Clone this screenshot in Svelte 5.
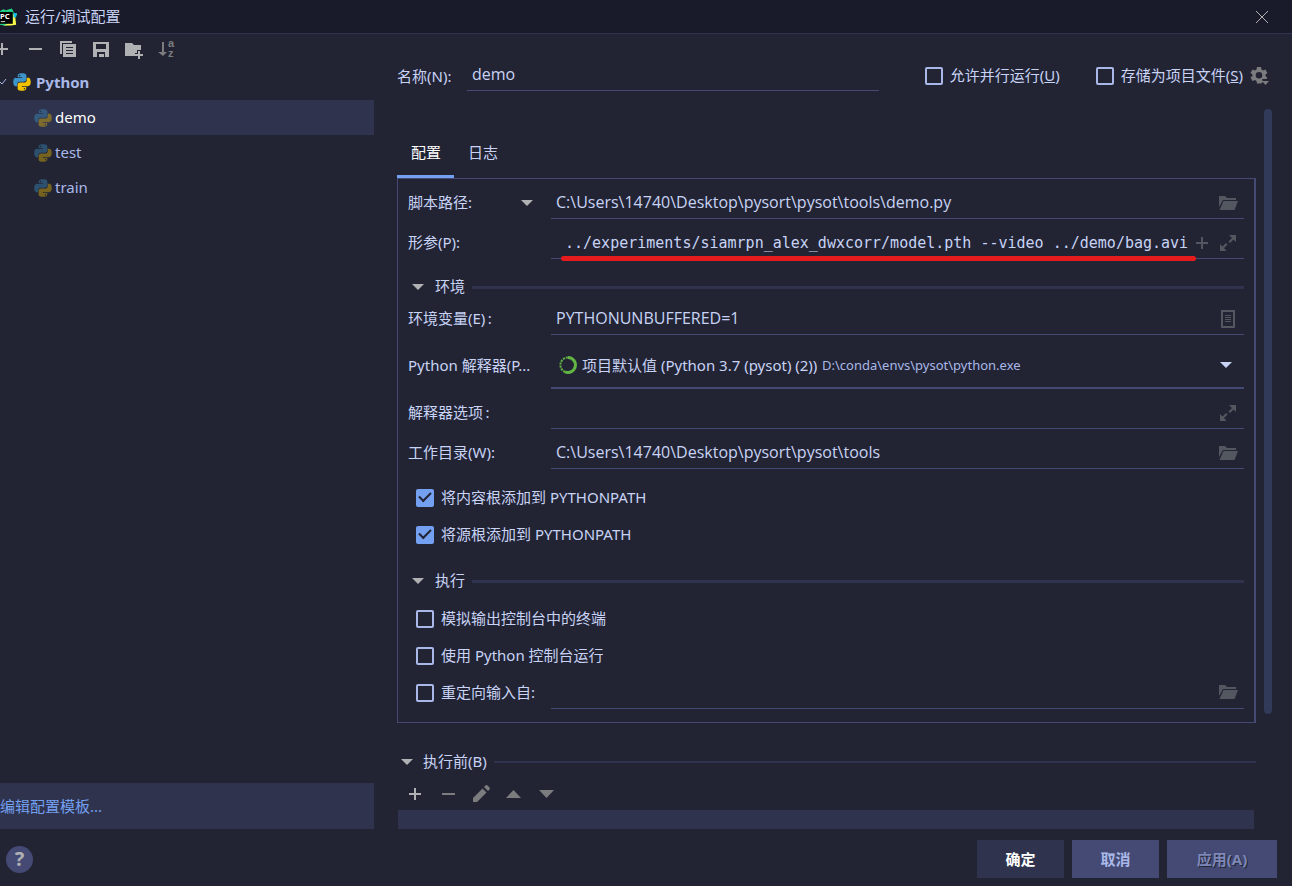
<script lang="ts">
    let name = $state('demo')
    let selected = $state('demo')
    let tab = $state('配置')
    let scriptPath = $state('C:\\Users\\14740\\Desktop\\pysort\\pysot\\tools\\demo.py')
    let params = $state('../experiments/siamrpn_alex_dwxcorr/model.pth --video ../demo/bag.avi')
    let envVars = $state('PYTHONUNBUFFERED=1')
    let options = $state('')
    let workDir = $state('C:\\Users\\14740\\Desktop\\pysort\\pysot\\tools')
    let redirect = $state('')

    const configs = ['demo', 'test', 'train']
    const tabs = ['配置', '日志']
    let pathChecks = $state([
        { label: '将内容根添加到 PYTHONPATH', on: true },
        { label: '将源根添加到 PYTHONPATH', on: true },
    ])
    let runChecks = $state([
        { label: '模拟输出控制台中的终端', on: false },
        { label: '使用 Python 控制台运行', on: false },
    ])
</script>

{#snippet python()}
    <svg class="icon" viewBox="0 0 16 16" aria-hidden="true">
        <path fill="#3d94c9" fill-rule="evenodd" d="M7.9 1C4.5 1 4.6 2.6 4.6 2.6V4.1H8.1V4.7H3.3C3.3 4.7 1 4.4 1 8s2 3.4 2 3.4h1.2V9.7s-.1-2 2-2h3.4s1.9 0 1.9-1.9V2.7S11.7 1 7.9 1ZM6 2.1a.6.6 0 1 1 0 1.2.6.6 0 0 1 0-1.2Z" />
        <path fill="#f2c100" fill-rule="evenodd" transform="rotate(180 8 8)" d="M7.9 1C4.5 1 4.6 2.6 4.6 2.6V4.1H8.1V4.7H3.3C3.3 4.7 1 4.4 1 8s2 3.4 2 3.4h1.2V9.7s-.1-2 2-2h3.4s1.9 0 1.9-1.9V2.7S11.7 1 7.9 1ZM6 2.1a.6.6 0 1 1 0 1.2.6.6 0 0 1 0-1.2Z" />
    </svg>
{/snippet}

{#snippet plus()}
    <svg class="icon" viewBox="0 0 20 20" aria-hidden="true"><path fill="currentColor" d="M9 4h2v5h5v2h-5v5H9v-5H4V9h5z" /></svg>
{/snippet}

{#snippet minus()}
    <svg class="icon" viewBox="0 0 20 20" aria-hidden="true"><path fill="currentColor" d="M4 9h13v2H4z" /></svg>
{/snippet}

{#snippet arrow()}
    <svg class="arrow" viewBox="0 0 12 8" aria-hidden="true"><path fill="currentColor" d="M0 1h12L6 7z" /></svg>
{/snippet}

{#snippet folder()}
    <button class="field-btn" aria-label="浏览">
        <svg class="icon" viewBox="0 0 20 20" aria-hidden="true">
            <path fill="currentColor" d="M1 3h6l2 2h9v2H5L1 14zM5.500 8H20l-3.500 9H1.500z" />
        </svg>
    </button>
{/snippet}

{#snippet expand()}
    <button class="field-btn" aria-label="展开">
        <svg class="icon" viewBox="0 0 20 20" aria-hidden="true">
            <path fill="currentColor" d="M11 2h7v7l-2.500-2.500-3.500 3.500-1.500-1.500L14 5zM2 11l2.500 2.500L8 10l1.500 1.500L6 15l2.500 3H2z" />
        </svg>
    </button>
{/snippet}

<div class="dialog">
    <header class="titlebar">
        <svg class="logo" viewBox="0 0 20 20" aria-hidden="true">
            <path fill="#21d789" d="M0 3 4 1l3 1 7-2 2 4v12l-3 3-8 1-5-1z" />
            <path fill="#fcf84a" d="m15 7 5-1-2 5 1 8-6 1H4l11-5z" />
            <path fill="#07c3f2" d="m16 5 4 1-1 4-3 1z" />
            <path fill="#000" d="M0 4h15v14H0z" />
            <path fill="#fff" d="M1 15h5v1H1z" />
            <text x="0" y="12" fill="#fff" font-size="9" font-weight="bold">PC</text>
        </svg>
        <h1>运行/调试配置</h1>
        <button class="close" aria-label="关闭">
            <svg viewBox="0 0 12 12" aria-hidden="true"><path d="m0 0 12 12M12 0 0 12" stroke="currentColor" /></svg>
        </button>
    </header>

    <div class="body">
        <aside>
            <div class="toolbar">
                <button aria-label="添加">{@render plus()}</button>
                <button aria-label="移除">{@render minus()}</button>
                <button aria-label="复制">
                    <svg class="icon" viewBox="0 0 20 20" aria-hidden="true">
                        <path fill="currentColor" fill-rule="evenodd" d="M2 2h12v2H4v11H2zM5 5h13v13H5zM8 8v1h7V8zm0 3v1h7v-1zm0 3v1h7v-1z" />
                    </svg>
                </button>
                <button aria-label="保存">
                    <svg class="icon" viewBox="0 0 20 20" aria-hidden="true">
                        <path fill="currentColor" fill-rule="evenodd" d="M2 3h16v15H2zM5 5v5h10V5zM6 13v5h2v-3h5v3h1v-5z" />
                    </svg>
                </button>
                <button aria-label="新建文件夹">
                    <svg class="icon" viewBox="0 0 20 20" aria-hidden="true">
                        <path fill="currentColor" d="M1 4h7l2 2h7v5h-4v3h-2v3H1z" />
                        <path fill="currentColor" d="M14 12h2v3h3v2h-3v3h-2v-3h-3v-2h3z" />
                    </svg>
                </button>
                <button class="dim" aria-label="排序">
                    <svg class="icon sort" viewBox="0 0 20 20" aria-hidden="true">
                        <path fill="currentColor" d="M5 3h2v10h3l-4 4-5-4h4z" />
                        <text x="11" y="8" fill="currentColor">a</text>
                        <text x="11" y="18" fill="currentColor">z</text>
                    </svg>
                </button>
            </div>
            <div class="group">
                <svg class="chevron" viewBox="0 0 8 8" aria-hidden="true"><path d="m0 4 2 2 4-5" fill="none" stroke="currentColor" /></svg>
                {@render python()}
                <span>Python</span>
            </div>
            <ul class="tree">
                {#each configs as config}
                    <li>
                        <button class:selected={selected === config} onclick={() => (selected = config)}>
                            <span class="faded">{@render python()}</span><span class="label">{config}</span>
                        </button>
                    </li>
                {/each}
            </ul>
            <div class="templates"><a href="#templates">编辑配置模板...</a></div>
        </aside>

        <main>
            <div class="name-row">
                <label for="name">名称(N):</label>
                <input id="name" class="text" bind:value={name} />
                <label class="check"><input type="checkbox" /><span>允许并行运行(<u>U</u>)</span></label>
                <label class="check"><input type="checkbox" /><span>存储为项目文件(<u>S</u>)</span></label>
                <button class="gear" aria-label="设置">
                    <svg class="icon" viewBox="0 0 20 20" aria-hidden="true">
                        <path fill="currentColor" fill-rule="evenodd" d="M7 1h4l.5 2.500 1.500.9 2.400-.9 2 3.400L15.500 8.500v1.600l1.900 1.600-1 1.300H12l1 3-2 1.500H7l-.5-2.500-1.600-.9-2.400.9-2-3.400 2-1.600V8.500l-2-1.600 2-3.400 2.400.9L6.500 3.500zM9 6a3.300 3.300 0 1 0 0 6.600A3.300 3.300 0 0 0 9 6z" />
                        <path fill="currentColor" d="M12 15h7l-3.500 4z" />
                    </svg>
                </button>
            </div>

            <div class="scroll">
                <div class="content">
                    <div class="tabs" role="tablist">
                        {#each tabs as t}
                            <button role="tab" aria-selected={tab === t} class:active={tab === t} onclick={() => (tab = t)}>{t}</button>
                        {/each}
                    </div>

                    <div class="panel">
                        <div class="row">
                            <div class="kind">
                                <select aria-label="目标类型"><option>脚本路径:</option></select>
                                {@render arrow()}
                            </div>
                            <div class="field">
                                <input class="text" aria-label="脚本路径" bind:value={scriptPath} />
                                {@render folder()}
                            </div>
                        </div>
                        <div class="row">
                            <label for="params">形参(P):</label>
                            <div class="field marked">
                                <input id="params" class="text mono" bind:value={params} />
                                <button class="field-btn" aria-label="插入宏">{@render plus()}</button>
                                {@render expand()}
                            </div>
                        </div>

                        <h2>{@render arrow()}<span>环境</span></h2>
                        <div class="row first">
                            <label for="env">环境变量(E)&thinsp;:</label>
                            <div class="field">
                                <input id="env" class="text" bind:value={envVars} />
                                <button class="field-btn" aria-label="编辑环境变量">
                                    <svg class="icon" viewBox="0 0 20 20" aria-hidden="true">
                                        <path fill="currentColor" fill-rule="evenodd" d="M3 1h14v18H3zM5 3v14h10V3zM7 6h6v1H7zm0 2h6v1H7zm0 2h6v1H7zm0 2h6v1H7z" />
                                    </svg>
                                </button>
                            </div>
                        </div>
                        <div class="row">
                            <label for="interpreter">Python 解释器(P...</label>
                            <div class="field combo">
                                <svg class="icon" viewBox="0 0 20 20" aria-hidden="true">
                                    <g fill="none" stroke="#62b543">
                                        <path stroke-width="3" d="M10 2.500a7.500 7.500 0 1 1-3 14.400" />
                                        <path stroke-width="2" stroke-dasharray="2 1" d="M7 16.900A7.500 7.500 0 0 1 10 2.500" />
                                    </g>
                                </svg>
                                <select id="interpreter"><option>项目默认值 (Python 3.7 (pysot) (2))</option></select>
                                <span class="path">D:\conda\envs\pysot\python.exe</span>
                                {@render arrow()}
                            </div>
                        </div>
                        <div class="row">
                            <label for="options">解释器选项&thinsp;:</label>
                            <div class="field">
                                <input id="options" class="text" bind:value={options} />
                                {@render expand()}
                            </div>
                        </div>
                        <div class="row">
                            <label for="workdir">工作目录(W):</label>
                            <div class="field">
                                <input id="workdir" class="text" bind:value={workDir} />
                                {@render folder()}
                            </div>
                        </div>
                        <div class="checks roots">
                            {#each pathChecks as c}
                                <label class="check"><input type="checkbox" bind:checked={c.on} /><span>{c.label}</span></label>
                            {/each}
                        </div>

                        <h2>{@render arrow()}<span>执行</span></h2>
                        <div class="checks">
                            {#each runChecks as c}
                                <label class="check"><input type="checkbox" bind:checked={c.on} /><span>{c.label}</span></label>
                            {/each}
                            <div class="redirect">
                                <label class="check"><input type="checkbox" /><span>重定向输入自:</span></label>
                                <div class="field">
                                    <input class="text" aria-label="输入文件" bind:value={redirect} />
                                    {@render folder()}
                                </div>
                            </div>
                        </div>
                    </div>

                    <h2 class="before">{@render arrow()}<span>执行前(B)</span></h2>
                    <div class="toolbar tasks">
                        <button aria-label="添加任务">{@render plus()}</button>
                        <button class="dim" aria-label="移除任务">{@render minus()}</button>
                        <button class="dim" aria-label="编辑任务">
                            <svg class="icon" viewBox="0 0 20 20" aria-hidden="true">
                                <path fill="currentColor" d="m2 14 9.500-9.500 4 4L6 18H2zM13 3l1.500-1.500q1-1 2 0l2 2q1 1 0 2L17 7z" />
                            </svg>
                        </button>
                        <button class="dim" aria-label="上移">
                            <svg class="icon" viewBox="0 0 20 20" aria-hidden="true"><path fill="currentColor" d="M2 14h15L9.500 6z" /></svg>
                        </button>
                        <button class="dim" aria-label="下移">
                            <svg class="icon" viewBox="0 0 20 20" aria-hidden="true"><path fill="currentColor" d="M2 6h15l-7.500 8z" /></svg>
                        </button>
                    </div>
                    <div class="task-list"></div>
                </div>
                <div class="scrollbar"></div>
            </div>
        </main>
    </div>

    <footer>
        <button class="help" aria-label="帮助">?</button>
        <button class="primary">确定</button>
        <button>取消</button>
        <button class="apply" disabled>应用(A)</button>
    </footer>
</div>

<style>
    :global(body) {
        background: #222434;
    }

    .dialog {
        display: flex;
        flex-direction: column;
        min-height: 100vh;
        box-sizing: border-box;
        color: #c8d3f5;
        background: #222434;
        font: 15px/20px "Noto Sans", "Noto Sans CJK SC", sans-serif;
    }

    button, input, select {
        margin: 0;
        padding: 0;
        border: 0;
        color: inherit;
        background: none;
        font: inherit;
    }

    svg {
        display: block;
        flex: none;
    }

    .icon {
        width: 20px;
        height: 20px;
    }

    .sort {
        overflow: visible;
        font: bold 11px "Liberation Sans", sans-serif;
    }

    .arrow {
        width: 12px;
        height: 8px;
        color: #afb1b3;
    }

    .titlebar {
        display: flex;
        align-items: center;
        height: 33px;
        border-bottom: 1px solid #2f334d;
        background: #191a2a;
    }

    .logo {
        width: 17px;
        height: 20px;
    }

    h1 {
        flex: 1;
        margin: 0 0 0 8px;
        padding-bottom: 2px;
        font-size: 15px;
        font-weight: normal;
    }

    .close {
        padding: 8px 24px;
        color: #afb1b3;
    }

    .close svg {
        width: 12px;
        height: 12px;
    }

    .body {
        display: flex;
        flex: 1;
    }

    aside {
        display: flex;
        flex-direction: column;
        width: 29%;
        max-width: 374px;
    }

    .toolbar {
        display: flex;
        align-items: center;
        gap: 13px;
        height: 30px;
        color: #afb1b3;
    }

    aside .toolbar {
        margin-left: -8px;
    }

    .dim {
        color: #7b7c7d;
    }

    .group {
        display: flex;
        align-items: center;
        height: 36px;
        color: #a9b8e8;
        font-weight: bold;
    }

    .chevron {
        width: 8px;
        height: 8px;
        margin-right: 4px;
    }

    .group span {
        margin-left: 4px;
    }

    .tree {
        flex: 1;
        margin: 0;
        padding: 0;
        list-style: none;
    }

    .tree button {
        display: flex;
        align-items: center;
        gap: 2px;
        width: 100%;
        height: 35px;
        padding-left: 33px;
        color: #a9b8e8;
    }

    .tree .selected {
        color: #fff;
        background: #2f334d;
    }

    .faded {
        opacity: 0.4;
    }

    .templates {
        display: flex;
        align-items: center;
        height: 46px;
        background: #2f334d;
    }

    a {
        color: #74a0f1;
        text-decoration: none;
    }

    main {
        display: flex;
        flex: 1;
        flex-direction: column;
        min-width: 0;
        padding: 0 20px 0 23px;
    }

    .name-row {
        display: flex;
        align-items: center;
        box-sizing: border-box;
        height: 75px;
        padding: 8px 2px 0 0;
    }

    .name-row > label:first-child {
        width: 70px;
    }

    .name-row .text {
        flex: 1;
        height: 28px;
        border-bottom: 1px solid #444a73;
        margin-right: 46px;
    }

    .name-row .check {
        margin-right: 36px;
    }

    .name-row .check + .check {
        margin-right: 7px;
    }

    .gear {
        color: #7b7c7d;
    }

    .text {
        min-width: 0;
        padding: 0 5px 2px;
        outline: none;
        font: 16px/20px "Open Sans", "Noto Sans CJK SC", sans-serif;
    }

    .row > label, .kind select, .check span, .label, h2 span {
        padding-bottom: 2px;
    }

    .check {
        display: flex;
        align-items: center;
        gap: 7px;
    }

    .check input {
        display: grid;
        place-items: center;
        box-sizing: border-box;
        width: 18px;
        height: 18px;
        border: 2px solid #a9b8e8;
        border-radius: 2px;
        appearance: none;
    }

    .check input:checked {
        border-color: #74a0f1;
        background: #74a0f1;
    }

    .check input:checked::after {
        content: "";
        width: 10px;
        height: 5px;
        margin-bottom: 4px;
        border: solid #222434;
        border-width: 0 0 2px 2px;
        transform: rotate(-45deg);
    }

    .scroll {
        display: flex;
        flex: 1;
        gap: 8px;
    }

    .content {
        display: flex;
        flex: 1;
        flex-direction: column;
        min-width: 0;
    }

    .scrollbar {
        width: 8px;
        height: 84%;
        border-radius: 4px;
        background: #323a5a;
    }

    .tabs {
        display: flex;
        padding-top: 20px;
    }

    .tabs button {
        height: 49px;
        padding: 0 13px 0 14px;
        border-bottom: 3px solid transparent;
    }

    .tabs .active {
        color: #fff;
        border-color: #74a0f1;
    }

    .panel {
        padding: 0 10px;
        border: 1px solid #444a73;
        border-right-width: 2px;
    }

    .row {
        display: grid;
        grid-template-columns: 143px 1fr;
        align-items: center;
        padding-top: 8px;
    }

    .row.first {
        padding-top: 0;
    }

    .kind {
        display: flex;
        align-items: center;
        justify-content: space-between;
        padding-right: 18px;
    }

    select {
        appearance: none;
        outline: none;
    }

    .field {
        position: relative;
        display: flex;
        flex: 1;
        align-items: center;
        box-sizing: border-box;
        height: 32px;
        padding-right: 3px;
        border-bottom: 1px solid #444a73;
    }

    .field .text {
        flex: 1;
    }

    .field-btn {
        padding: 0 3px;
        color: #53575f;
    }

    .field .mono {
        padding: 0 0 0 14px;
        font: 15px/20px "DejaVu Sans Mono", monospace;
    }

    .marked::after {
        content: "";
        position: absolute;
        left: 10px;
        right: 48px;
        bottom: -3px;
        height: 5px;
        border-radius: 3px;
        background: #e61c1c;
    }

    .combo {
        height: 46px;
        padding: 0 12px 0 7px;
        border-bottom-width: 2px;
    }

    .combo select {
        margin: 0 4px;
    }

    .combo .arrow {
        margin-left: auto;
        color: #c8d3f5;
    }

    .path {
        color: #a9b8e8;
        font-size: 13px;
    }

    h2 {
        display: flex;
        align-items: center;
        height: 32px;
        margin: 12px 0 0;
        padding-left: 4px;
        font-size: 15px;
        font-weight: normal;
    }

    h2 span {
        margin: 0 7px 0 11px;
    }

    h2::after {
        content: "";
        flex: 1;
        height: 3px;
        background: #2f334d;
    }

    .checks {
        padding: 3px 0 11px 8px;
    }

    .checks .check {
        height: 37px;
    }

    .roots {
        padding: 10px 0 0 8px;
    }

    .redirect {
        display: grid;
        grid-template-columns: 135px 1fr;
        align-items: center;
    }

    .before {
        margin-top: 23px;
    }

    .before span {
        margin-left: 10px;
    }

    .before::after {
        height: 2px;
    }

    .tasks {
        height: 32px;
        padding-left: 8px;
    }

    .task-list {
        flex: 1;
        margin: 0 2px 0 1px;
        min-height: 19px;
        background: #2f334d;
    }

    footer {
        display: flex;
        align-items: center;
        gap: 8px;
        box-sizing: border-box;
        height: 57px;
        padding: 3px 15px 0 6px;
        font-weight: bold;
    }

    footer button {
        min-width: 87px;
        height: 38px;
        color: #a9b8e8;
        background: #444a73;
    }

    footer .primary {
        color: #fff;
        background: #2f334d;
    }

    footer .apply {
        min-width: 110px;
        color: #7d88b8;
        text-shadow: 1px 1px #222434;
    }

    footer .help {
        min-width: 27px;
        height: 27px;
        margin-right: auto;
        border-radius: 50%;
        color: #afb1b3;
        font-size: 20px;
    }
</style>
